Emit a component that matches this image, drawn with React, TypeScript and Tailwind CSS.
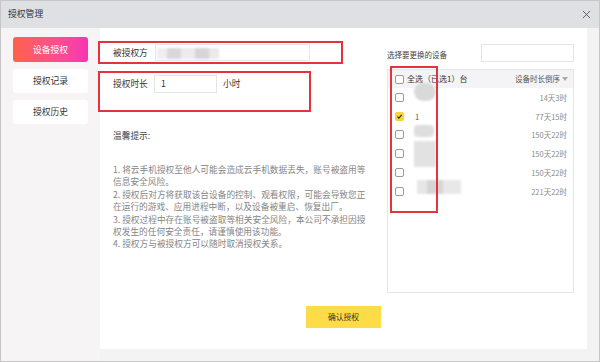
import React from 'react';

const tips = [
  '1. 将云手机授权至他人可能会造成云手机数据丢失，账号被盗用等信息安全风险。',
  '2. 授权后对方将获取该台设备的控制、观看权限，可能会导致您正在运行的游戏、应用进程中断，以及设备被重启、恢复出厂。',
  '3. 授权过程中存在账号被盗取等相关安全风险，本公司不承担因授权发生的任何安全责任，请谨慎使用该功能。',
  '4. 授权方与被授权方可以随时取消授权关系。',
];

const devices = [
  { id: 1, time: '14天3时', checked: false, label: '', blur: 'row1' },
  { id: 2, time: '77天15时', checked: true, label: '1', blur: '' },
  { id: 3, time: '150天22时', checked: false, label: '', blur: 'row3' },
  { id: 4, time: '150天22时', checked: false, label: '', blur: 'row4' },
  { id: 5, time: '150天22时', checked: false, label: '', blur: 'row5' },
  { id: 6, time: '221天22时', checked: false, label: '', blur: 'row6' },
];

const Checkbox = ({ checked }: { checked?: boolean }) =>
  checked ? (
    <span className="w-[9px] h-[9px] rounded-[2px] bg-[#f8d43c] flex items-center justify-center">
      <svg width="7" height="7" viewBox="0 0 10 10">
        <path d="M2 5.2 L4.2 7.3 L8 2.8" stroke="#333" strokeWidth="1.8" fill="none" />
      </svg>
    </span>
  ) : (
    <span className="w-[9px] h-[9px] rounded-[2px] border border-[#9a9a9a] bg-white" />
  );

// blurred-out device names
const Blur = ({ kind }: { kind: string }) => {
  if (kind === 'row1')
    return <span className="absolute left-[26px] -top-[5px] w-[22px] h-[18px] rounded-full bg-[#d9d9d9] blur-[1px]" />;
  if (kind === 'row3')
    return <span className="absolute left-[26px] top-[-1px] w-[20px] h-[12px] rounded-[4px] bg-[#dedede] blur-[1px]" />;
  if (kind === 'row4')
    return <span className="absolute left-[26px] top-[-3px] w-[22px] h-[26px] bg-[#e2e2e2] blur-[1px]" />;
  if (kind === 'row6')
    return (
      <span className="absolute left-[29px] top-[-2px] flex blur-[1px]">
        <span className="w-[10px] h-[14px] bg-[#e6e6e6]" />
        <span className="w-[16px] h-[14px] bg-[#d5d5d5]" />
        <span className="w-[18px] h-[14px] bg-[#e8e8e8]" />
      </span>
    );
  return null;
};

export default function App() {
  return (
    <div
      className="w-[600px] h-[362px] border border-[#c6c6c6] flex flex-col overflow-hidden text-[#333]"
      style={{ fontFamily: '"Noto Sans CJK SC", "Noto Sans", sans-serif' }}
    >
      {/* title bar */}
      <div className="h-[27px] bg-[#dee0e4] flex items-center justify-between pl-[7px] pr-[8px]">
        <span className="text-[8.8px] leading-none text-[#333]">授权管理</span>
        <svg width="9" height="9" viewBox="0 0 10 10">
          <path d="M1 1 L9 9 M9 1 L1 9" stroke="#555" strokeWidth="1" />
        </svg>
      </div>

      <div className="flex flex-1 bg-[#f3f3f3]">
        {/* sidebar */}
        <div className="w-[99px] bg-[#f6f4f4] flex flex-col gap-[7px] pt-[9px] pl-[12px]">
          <div className="w-[75px] h-[25px] rounded-[3px] bg-gradient-to-r from-[#ff6147] to-[#f934b4] text-white text-[8.8px] flex items-center justify-center">
            设备授权
          </div>
          <div className="w-[75px] h-[24px] rounded-[3px] bg-white text-[8.8px] flex items-center justify-center">
            授权记录
          </div>
          <div className="w-[75px] h-[24px] rounded-[3px] bg-white text-[8.8px] flex items-center justify-center">
            授权历史
          </div>
        </div>

        {/* main panel */}
        <div className="w-[487px] h-[321px] bg-white relative flex flex-col">
          <div className="flex pt-[16px]">
            {/* left form */}
            <div className="w-[287px] pl-[13px] text-[8.7px]">
              <div className="flex items-center h-[17px]">
                <span className="w-[42px]">被授权方</span>
                <div className="relative w-[155px] h-[17px] border border-[#e8e8e8]">
                  <span className="absolute left-[1px] top-[3px] flex blur-[1px]">
                    <span className="w-[10px] h-[11px] bg-[#eeeeee]" />
                    <span className="w-[14px] h-[11px] bg-[#d8d8d8]" />
                    <span className="w-[14px] h-[11px] bg-[#ececec]" />
                    <span className="w-[14px] h-[11px] bg-[#d6d6d6]" />
                    <span className="w-[10px] h-[11px] bg-[#eaeaea]" />
                  </span>
                </div>
              </div>
              <div className="flex items-center h-[18px] mt-[14px]">
                <span className="w-[41px]">授权时长</span>
                <div className="w-[63px] h-[18px] border border-[#e4e4e4] flex items-center pl-[6px]">1</div>
                <span className="ml-[6px]">小时</span>
              </div>

              <div className="mt-[37px] text-[#444] leading-[12px]">温馨提示:</div>
              <div className="mt-[22px] w-[258px] text-[#858585] leading-[12.4px] break-all">
                {tips.map((t) => (
                  <p key={t}>{t}</p>
                ))}
              </div>
            </div>

            {/* device selector */}
            <div className="w-[187px]">
              <div className="flex items-end justify-between">
                <span className="text-[7.5px] text-[#444] leading-[12px] mb-[1px]">选择要更换的设备</span>
                <div className="w-[93px] h-[18px] border border-[#e4e4e4]" />
              </div>
              <div className="mt-[7px] h-[224px] border border-[#e6e6e6]">
                <div className="h-[18px] bg-[#f4f4f6] flex items-center justify-between pl-[7px] pr-[5px] text-[7.5px]">
                  <div className="flex items-center gap-[3px]">
                    <Checkbox />
                    <span className="text-[#333] text-[8px]">全选（已选1）台</span>
                  </div>
                  <div className="flex items-center gap-[2px] text-[#555]">
                    <span>设备时长倒序</span>
                    <svg width="6" height="4" viewBox="0 0 6 4">
                      <path d="M0 0 L6 0 L3 4 Z" fill="#aaa" />
                    </svg>
                  </div>
                </div>
                {devices.map((d) => (
                  <div key={d.id} className="h-[18.8px] flex items-center justify-between pl-[7px] pr-[6px] relative">
                    <div className="flex items-center gap-[11px] relative">
                      <Checkbox checked={d.checked} />
                      <span className="text-[7.5px] text-[#555]">{d.label}</span>
                    </div>
                    {d.blur && <Blur kind={d.blur} />}
                    <span className="text-[7.5px] text-[#8a8a8a]">{d.time}</span>
                  </div>
                ))}
              </div>
            </div>
          </div>

          <div className="mt-auto mb-[21px] mx-auto w-[75px] h-[22px] bg-[#fedc48] text-[7.8px] text-[#333] flex items-center justify-center">
            确认授权
          </div>

          {/* red annotation boxes */}
          <div className="absolute left-[-2px] top-[13px] w-[245px] h-[23px] border-2 border-[#e2343a]" />
          <div className="absolute left-[-2px] top-[43px] w-[213px] h-[41px] border-2 border-[#e2343a]" />
          <div className="absolute left-[290px] top-[38px] w-[48px] h-[147px] border-2 border-[#e2343a]" />
        </div>
      </div>
    </div>
  );
}
